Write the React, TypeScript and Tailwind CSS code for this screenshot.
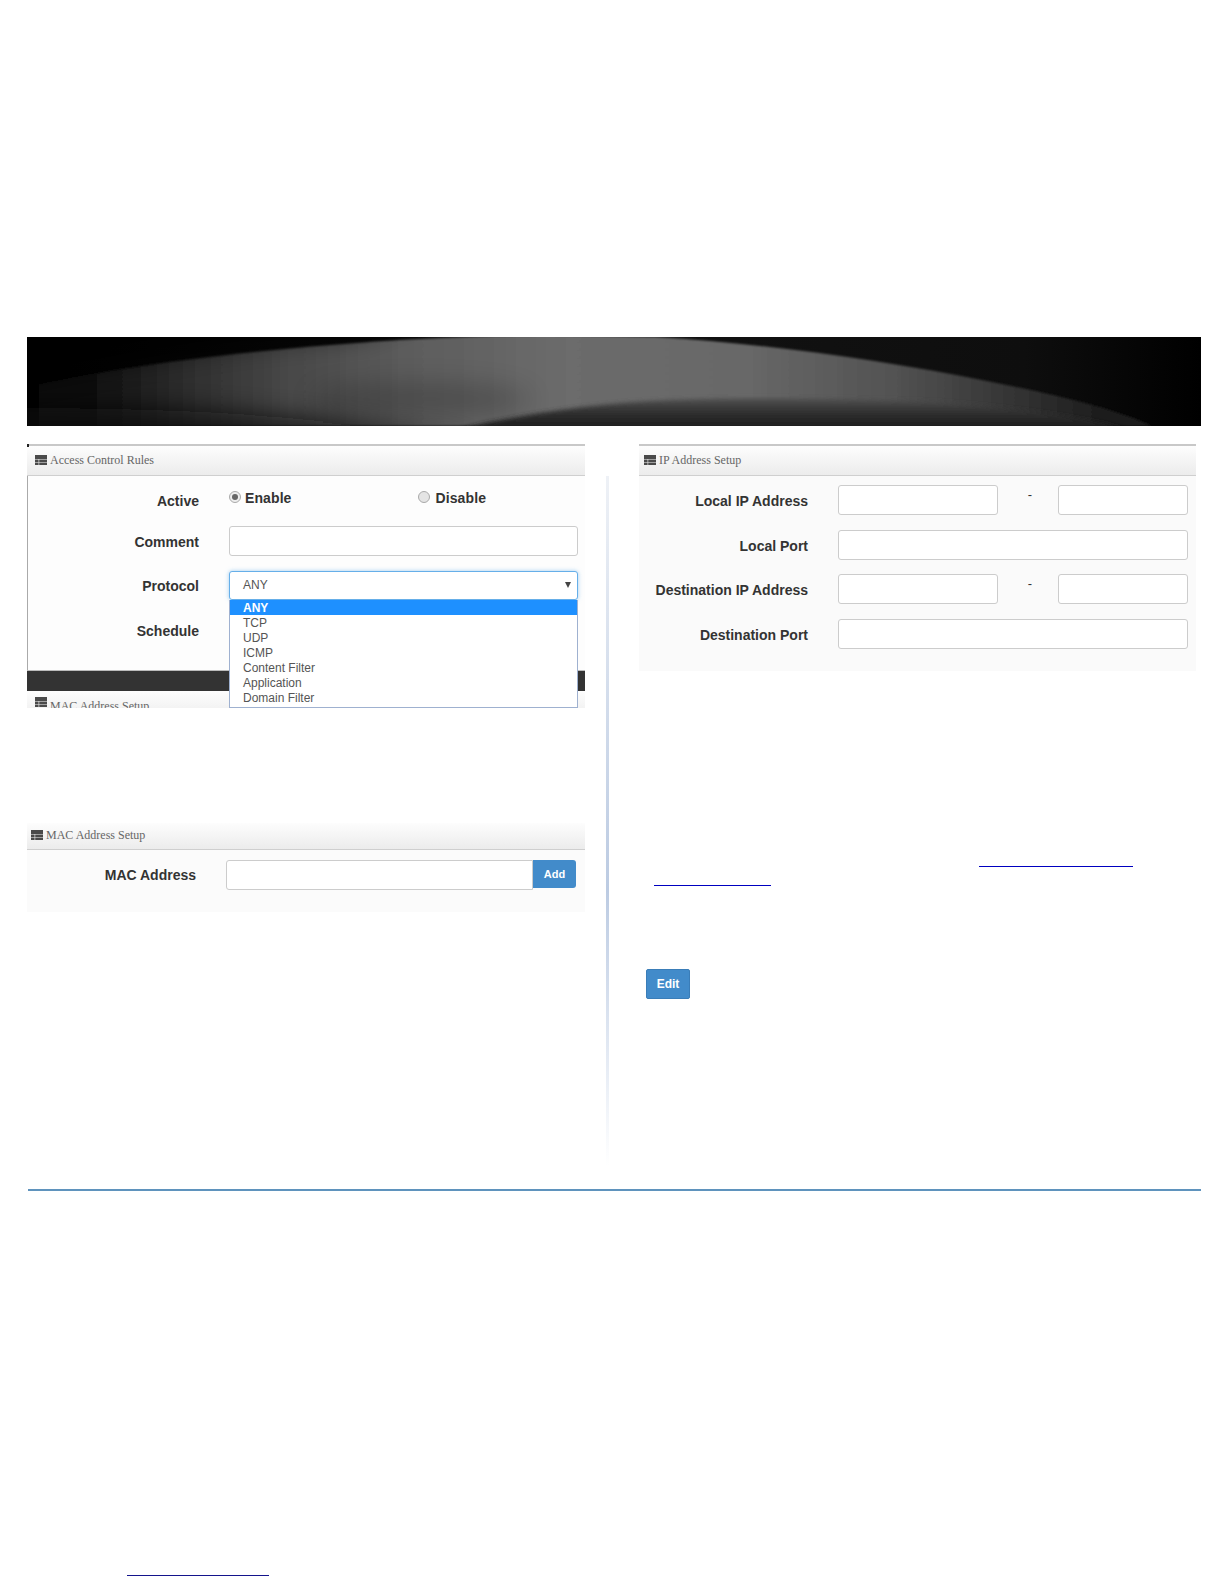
const TableIcon = () => (
  <svg viewBox="0 0 12 10" className="w-[12px] h-[10px] shrink-0" fill="#4a4a4a">
    <rect x="0" y="0" width="12" height="4" />
    <rect x="0" y="4.5" width="3.6" height="2.5" />
    <rect x="4.2" y="4.5" width="7.8" height="2.5" />
    <rect x="0" y="7.5" width="3.6" height="2.5" />
    <rect x="4.2" y="7.5" width="7.8" height="2.5" />
  </svg>
);

const PanelHeader = ({ title, className }: { title: string; className: string }) => (
  <div
    className={`flex items-center gap-[3px] bg-gradient-to-b from-[#fdfdfd] to-[#ececec] border-b border-[#cfcfcf] font-['Liberation_Serif',serif] text-[12px] text-[#666] ${className}`}
  >
    <TableIcon />
    <span>{title}</span>
  </div>
);

const Label = ({ children, width, className = '' }: { children: string; width: string; className?: string }) => (
  <div className={`${width} shrink-0 text-right font-bold text-[14px] text-[#333] ${className}`}>{children}</div>
);

const Field = ({ className = 'flex-1' }: { className?: string }) => (
  <div className={`h-[30px] bg-white border border-[#ccc] rounded-[3px] ${className}`} />
);

const Banner = () => (
  <div className="ml-[27px] w-[1174px] h-[89px] bg-black overflow-hidden">
    <svg viewBox="0 0 1174 89" className="w-full h-full block">
      <defs>
        <linearGradient id="back" x1="0" x2="1" y1="0" y2="0">
          <stop offset="0" stopColor="#000" />
          <stop offset="0.6" stopColor="#111" />
          <stop offset="0.85" stopColor="#0e0e0e" />
          <stop offset="1" stopColor="#000" />
        </linearGradient>
        <linearGradient id="arc" x1="0" x2="1" y1="0" y2="0">
          <stop offset="0" stopColor="#000" />
          <stop offset="0.08" stopColor="#0c0c0c" />
          <stop offset="0.16" stopColor="#2a2a2a" />
          <stop offset="0.26" stopColor="#484848" />
          <stop offset="0.36" stopColor="#5c5c5c" />
          <stop offset="0.5" stopColor="#6c6c6c" />
          <stop offset="0.65" stopColor="#686868" />
          <stop offset="0.78" stopColor="#525252" />
          <stop offset="0.88" stopColor="#343434" />
          <stop offset="0.96" stopColor="#1c1c1c" />
        </linearGradient>
        <linearGradient id="lobe" x1="0" x2="0" y1="0" y2="1">
          <stop offset="0" stopColor="#505050" />
          <stop offset="0.45" stopColor="#303030" />
          <stop offset="1" stopColor="#1c1c1c" />
        </linearGradient>
        <filter id="edge">
          <feGaussianBlur stdDeviation="0.8" />
        </filter>
        <filter id="lobeEdge" filterUnits="userSpaceOnUse" x="-100" y="-100" width="1400" height="300">
          <feGaussianBlur stdDeviation="2" />
        </filter>
        <filter id="wide" filterUnits="userSpaceOnUse" x="-200" y="-200" width="1600" height="500">
          <feGaussianBlur stdDeviation="13" />
        </filter>
      </defs>
      <rect width="1174" height="89" fill="url(#back)" />
      <path d="M-40 89 L-40 60 C60 30 300 0 520 -2 L629 0 C730 6 850 22 960 44 C1030 58 1090 72 1125 89 Z" fill="url(#arc)" filter="url(#edge)" />
      <path d="M-40 -30 L400 -30 L330 -4 C220 0 100 20 -40 50 Z" fill="#000" filter="url(#wide)" opacity="0.75" />
      <ellipse cx="394" cy="62" rx="110" ry="16" fill="#000" opacity="0.2" filter="url(#wide)" />
      <path d="M-40 110 L-40 72 C100 70 300 74 450 110 Z" fill="#111" filter="url(#wide)" opacity="0.8" />
      <path d="M432 92 C500 76 570 66 644 63 C730 60 830 62 909 65 C980 70 1050 78 1100 92 Z" fill="url(#lobe)" filter="url(#lobeEdge)" />
    </svg>
  </div>
);

const protocols = ['ANY', 'TCP', 'UDP', 'ICMP', 'Content Filter', 'Application', 'Domain Filter'];

const AccessPanel = () => (
  <div className="relative h-[264px] overflow-hidden">
    <div className="absolute left-0 top-0 w-[2px] h-[3px] bg-[#222]" />
    <PanelHeader title="Access Control Rules" className="h-[32px] pl-[8px] pb-[2px] border-t-2 border-t-[#c8c8c8]" />
    <div className="h-[194px] bg-[#fdfdfd] border-l border-[#aaa] relative">
      <div className="flex items-center h-[49px]">
        <Label width="w-[171px]" className="mt-[2px]">Active</Label>
        <div className="flex items-center ml-[30px] -mt-[5px] font-bold text-[14px] text-[#333]">
          <div className="w-[12px] h-[12px] rounded-full border border-[#aaa] bg-[#eee] -mt-[3px] flex items-center justify-center">
            <div className="w-[6px] h-[6px] rounded-full bg-[#666]" />
          </div>
          <span className="ml-[4px] tracking-[0.1px]">Enable</span>
          <div className="w-[12px] h-[12px] rounded-full border border-[#aaa] bg-[#e4e4e4] -mt-[3px] ml-[126px]" />
          <span className="ml-[6px] tracking-[0.1px]">Disable</span>
        </div>
      </div>
      <div className="flex items-center h-[30px] mt-[1px]">
        <Label width="w-[171px]" className="mt-[2px]">Comment</Label>
        <Field className="ml-[30px] w-[349px]" />
      </div>
      <div className="flex items-center h-[29px] mt-[15px]">
        <Label width="w-[171px]" className="mt-[2px]">Protocol</Label>
        <div className="ml-[30px] w-[349px] h-[29px] bg-white border border-[#66afe9] rounded-[3px] shadow-[0_0_4px_rgba(102,175,233,0.6)] flex items-center justify-between pl-[13px] pr-[6px] text-[12px] text-[#555]">
          <span className="-mt-[1px]">ANY</span>
          <svg viewBox="0 0 6 6" className="w-[6px] h-[6px] -mt-[1px]" fill="#444">
            <polygon points="0,0 6,0 3,6" />
          </svg>
        </div>
      </div>
      <div className="flex items-center h-[30px] mt-[16px]">
        <Label width="w-[171px]">Schedule</Label>
      </div>
    </div>
    <div className="h-[21px] bg-[#333] border-t border-[#bbb]" />
    <PanelHeader title="MAC Address Setup" className="h-[30px] pl-[8px] pt-[6px] items-start" />
    <div className="absolute left-[202px] top-[156px] w-[349px] h-[108px] bg-white border border-[#9fb1d0] border-t-0 text-[12px] leading-[15px] text-[#555]">
      {protocols.map((p, i) => (
        <div key={p} className={i === 0 ? 'h-[15px] pl-[13px] bg-[#1e90ff] text-white font-bold pt-[1px]' : 'h-[15px] pl-[13px] pt-[1px]'}>
          {p}
        </div>
      ))}
    </div>
  </div>
);

const MacPanel = () => (
  <div className="mt-[115px]">
    <PanelHeader title="MAC Address Setup" className="h-[27px] pl-[4px] pb-[2px]" />
    <div className="h-[62px] bg-[#fbfbfb] flex items-start pt-[10px]">
      <Label width="w-[169px]" className="mt-[5px]">MAC Address</Label>
      <div className="ml-[30px] flex">
        <Field className="w-[307px] rounded-r-none h-[29px]" />
        <div className="w-[43px] h-[28px] bg-[#428bca] rounded-r-[3px] flex items-center justify-center text-white font-bold text-[11px]">
          Add
        </div>
      </div>
    </div>
  </div>
);

const IpRange = ({ label }: { label: string }) => (
  <div className="flex items-center">
    <Label width="w-[169px]" className="mt-[2px]">{label}</Label>
    <Field className="ml-[30px] w-[160px]" />
    <div className="w-[60px] text-center text-[13px] text-[#333] pl-[4px] -mt-[10px]">-</div>
    <Field className="w-[130px]" />
  </div>
);

const PortRow = ({ label }: { label: string }) => (
  <div className="flex items-center">
    <Label width="w-[169px]" className="mt-[4px]">{label}</Label>
    <Field className="ml-[30px] w-[350px]" />
  </div>
);

const IpPanel = () => (
  <div>
    <PanelHeader title="IP Address Setup" className="h-[32px] pl-[5px] pb-[2px] border-t-2 border-t-[#c8c8c8]" />
    <div className="h-[195px] bg-[#fafafa] pt-[9px] flex flex-col gap-[14.5px]">
      <IpRange label="Local IP Address" />
      <PortRow label="Local Port" />
      <IpRange label="Destination IP Address" />
      <PortRow label="Destination Port" />
    </div>
  </div>
);

export default function App() {
  return (
    <div className="w-[1224px] h-[1584px] bg-white pt-[337px] font-['Liberation_Sans',Arial,sans-serif] overflow-hidden">
      <Banner />
      <div className="flex mt-[18px] h-[745px]">
        <div className="ml-[27px] w-[558px]">
          <AccessPanel />
          <MacPanel />
        </div>
        <div className="ml-[21px] mt-[32px] w-[3px] h-[690px] bg-gradient-to-b from-[#eef1f6] via-[#bccbe2] via-60% to-[#ffffff]" />
        <div className="ml-[30px] w-[557px]">
          <IpPanel />
          <div className="ml-[340px] mt-[195px] w-[154px] h-[1px] bg-[#0000c0]" />
          <div className="ml-[15px] mt-[18px] w-[117px] h-[1px] bg-[#0000c0]" />
          <div className="ml-[7px] mt-[83px] w-[44px] h-[30px] bg-[#428bca] border border-[#3a7db8] rounded-[2px] flex items-center justify-center text-white font-bold text-[12px]">
            Edit
          </div>
        </div>
      </div>
      <div className="ml-[28px] w-[1173px] h-[2px] bg-[#5f93bd]" />
      <div className="ml-[127px] mt-[384px] w-[142px] h-[1px] bg-[#14148c]" />
    </div>
  );
}
